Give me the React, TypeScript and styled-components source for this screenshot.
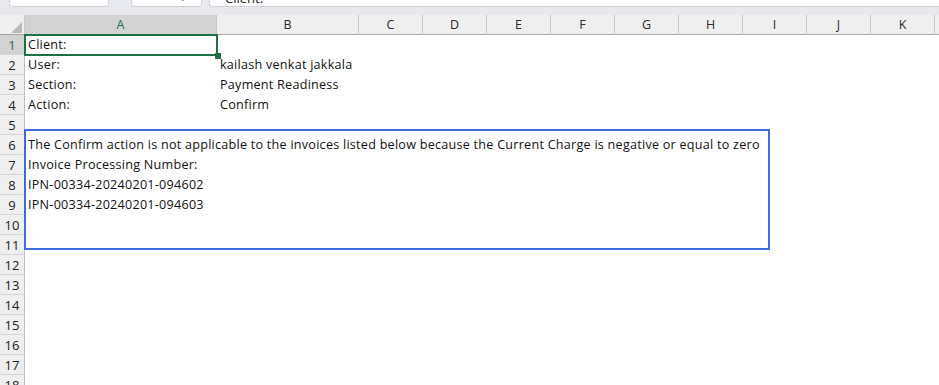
import React from 'react'
import styled, { createGlobalStyle } from 'styled-components'

const GlobalStyle = createGlobalStyle`
    html, body {
        margin: 0;
        padding: 0;
        background: #ffffff;
        overflow: hidden;
    }
    body {
        font-family: 'Open Sans', 'Liberation Sans', Arial, sans-serif;
    }
`

const columns = [
    { key: 'A', width: 192 },
    { key: 'B', width: 142 },
    { key: 'C', width: 64 },
    { key: 'D', width: 64 },
    { key: 'E', width: 64 },
    { key: 'F', width: 64 },
    { key: 'G', width: 64 },
    { key: 'H', width: 64 },
    { key: 'I', width: 64 },
    { key: 'J', width: 64 },
    { key: 'K', width: 64 },
    { key: 'L', width: 64 },
]

const cells: Record<number, { A?: string; B?: string }> = {
    1: { A: 'Client:' },
    2: { A: 'User:', B: 'kailash venkat jakkala' },
    3: { A: 'Section:', B: 'Payment Readiness' },
    4: { A: 'Action:', B: 'Confirm' },
    6: {
        A: 'The Confirm action is not applicable to the invoices listed below because the Current Charge is negative or equal to zero',
    },
    7: { A: 'Invoice Processing Number:' },
    8: { A: 'IPN-00334-20240201-094602' },
    9: { A: 'IPN-00334-20240201-094603' },
}

const rowCount = 18

const App = () => {
    const rows = Array.from({ length: rowCount }, (_, i) => i + 1)

    return (
        <>
            <GlobalStyle />
            <Sheet>
                <FormulaBar>
                    <NameBox />
                    <Dots>⋮</Dots>
                    <FxBox>
                        <span>✕</span>
                        <span>✓</span>
                        <i>fx</i>
                    </FxBox>
                    <FormulaInput>Client:</FormulaInput>
                </FormulaBar>
                <Grid>
                    <Corner>
                        <Triangle />
                    </Corner>
                    {columns.map((c) => (
                        <ColHeader key={c.key} selected={c.key === 'A'}>
                            {c.key}
                        </ColHeader>
                    ))}
                    {rows.map((r) => (
                        <React.Fragment key={r}>
                            <RowHeader selected={r === 1}>{r}</RowHeader>
                            {columns.map((c) => (
                                <Cell key={c.key} active={r === 1 && c.key === 'A'}>
                                    {cells[r]?.[c.key as 'A' | 'B']}
                                    {r === 1 && c.key === 'A' && <FillHandle />}
                                </Cell>
                            ))}
                        </React.Fragment>
                    ))}
                    <Shape />
                </Grid>
            </Sheet>
        </>
    )
}

const Sheet = styled.div`
    width: 939px;
    height: 385px;
    overflow: hidden;
    background: #ffffff;
`

const FormulaBar = styled.div`
    height: 15px;
    box-sizing: border-box;
    padding: 0 0 8px 9px;
    background: #e7e9ee;
    display: flex;
    align-items: flex-end;
    overflow: hidden;
`

const BarBox = styled.div`
    height: 24px;
    flex-shrink: 0;
    box-sizing: border-box;
    background: #ffffff;
    border: 1px solid #cfd1d6;
    border-radius: 4px;
`

const NameBox = styled(BarBox)`
    width: 100px;
`

const Dots = styled.div`
    width: 22px;
    height: 24px;
    flex-shrink: 0;
    text-align: center;
    font-size: 14px;
    line-height: 14px;
    color: #444;
`

const FxBox = styled(BarBox)`
    width: 71px;
    display: flex;
    align-items: flex-end;
    justify-content: space-around;
    padding: 0 6px 4px 10px;
    font-size: 13px;
    color: #b5b5b5;
    i {
        color: #555;
        font-family: 'Liberation Serif', serif;
    }
`

const FormulaInput = styled(BarBox)`
    flex: 1;
    margin-left: 7px;
    border-right: none;
    border-radius: 4px 0 0 4px;
    padding: 0 0 0 15px;
    font-size: 13px;
    line-height: 28px;
    color: #222;
`

const Grid = styled.div`
    position: relative;
    display: grid;
    grid-template-columns: 25px 192px 142px repeat(9, 64px) 64px;
    grid-auto-rows: 20px;
`

const Corner = styled.div`
    box-sizing: border-box;
    background: #efefef;
    border-right: 1px solid #c8c8c8;
    border-bottom: 1px solid #a6a6a6;
    display: flex;
    justify-content: flex-end;
    align-items: flex-end;
    padding: 0 2px 1px 0;
`

const Triangle = styled.div`
    width: 0;
    height: 0;
    border-left: 11px solid transparent;
    border-bottom: 11px solid #b9b9b9;
`

const ColHeader = styled.div<{ selected?: boolean }>`
    box-sizing: border-box;
    background: ${(p) => (p.selected ? '#d2d2d2' : '#efefef')};
    border-right: 1px solid #c8c8c8;
    border-bottom: 1px solid ${(p) => (p.selected ? '#1f7145' : '#a6a6a6')};
    display: flex;
    align-items: center;
    justify-content: center;
    font-size: 12.5px;
    color: ${(p) => (p.selected ? '#1f7145' : '#2b2b2b')};
`

const RowHeader = styled.div<{ selected?: boolean }>`
    box-sizing: border-box;
    background: ${(p) => (p.selected ? '#d2d2d2' : '#efefef')};
    border-right: 1px solid ${(p) => (p.selected ? '#1f7145' : '#bdbdbd')};
    border-bottom: 1px solid #d6d6d6;
    display: flex;
    align-items: center;
    justify-content: center;
    font-size: 13px;
    color: ${(p) => (p.selected ? '#1f7145' : '#222')};
`

const Cell = styled.div<{ active?: boolean }>`
    position: relative;
    padding-left: 3px;
    font-size: 12.6px;
    letter-spacing: 0.25px;
    line-height: 20px;
    color: #111;
    white-space: nowrap;
    overflow: visible;
    z-index: ${(p) => (p.active ? 2 : 1)};
    outline: ${(p) => (p.active ? '2px solid #1f7145' : 'none')};
    outline-offset: -1px;
`

const FillHandle = styled.span`
    position: absolute;
    right: -4px;
    bottom: -4px;
    width: 6px;
    height: 6px;
    background: #1f7145;
`

const Shape = styled.div`
    position: absolute;
    left: 24px;
    top: 114px;
    width: 746px;
    height: 121px;
    box-sizing: border-box;
    border: 2px solid #4169e1;
    pointer-events: none;
    z-index: 3;
`

export default App
